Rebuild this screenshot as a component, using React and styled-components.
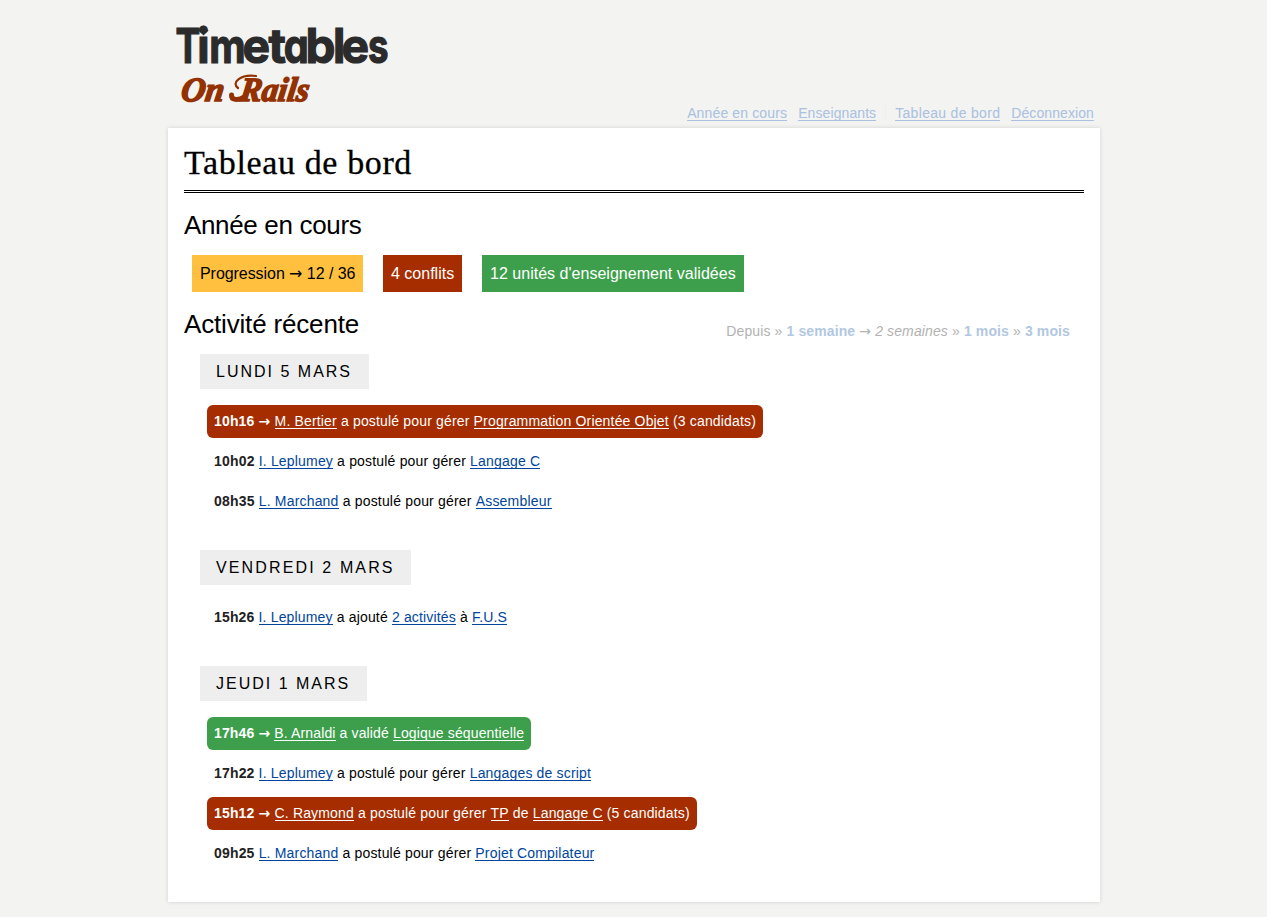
import React from 'react';
import styled, { createGlobalStyle, css } from 'styled-components';

const GlobalStyle = createGlobalStyle`
  * { box-sizing: border-box; }
  body {
    margin: 0;
    background: #f3f3f2;
    color: #000;
    font: 14px/17px "Liberation Sans", Arial, sans-serif;
  }
`;

const Page = styled.div`
  width: 932px;
  min-height: 917px;
  margin: 0 auto 0 168px;
`;

const Header = styled.header`
  display: flex;
  justify-content: space-between;
  align-items: flex-end;
  height: 128px;
  padding-right: 6px;
`;

const Logo = styled.svg`
  align-self: flex-start;
  width: 240px;
  height: 110px;
  overflow: visible;
`;

const LogoTitle = styled.text`
  font: 700 48px Inter, sans-serif;
  font-feature-settings: "cv11" 1;
  fill: #2b2b2b;
  stroke: #2b2b2b;
  stroke-width: 1.2;
`;

const LogoDiamond = styled.path`
  fill: #2b2b2b;
`;

const LogoTagline = styled.text`
  font: italic bold 34px "Liberation Serif", serif;
  fill: #933200;
  stroke: #933200;
  stroke-width: 1.6;
`;

const Swash = styled.path`
  fill: none;
  stroke: #933200;
  stroke-width: ${(p) => p.$weight}px;
  stroke-linecap: round;
`;

const Nav = styled.nav`
  display: flex;
  gap: 11px;
  padding-bottom: 7px;
`;

const NavLink = styled.a`
  height: 16px;
  line-height: 16px;
  color: #a9c0de;
  border-bottom: 1px solid #a9c0de;
  white-space: nowrap;
  letter-spacing: ${(p) => p.$spacing || 0}px;
`;

const Divider = styled.span`
  width: 1px;
  height: 15px;
  margin: 0 -2px;
  background: #eeeeef;
`;

const Panel = styled.main`
  height: 774px;
  padding: 16px;
  background: #fff;
  box-shadow: 0 0 4px rgba(0, 0, 0, 0.14);
`;

const Title = styled.h1`
  height: 49px;
  margin: 0 0 16px;
  border-bottom: 3px double #000;
  font: 400 34px/38px "Liberation Serif", Georgia, serif;
  letter-spacing: 0.63px;
  -webkit-text-stroke: 0.3px #000;
`;

const SectionTitle = styled.h2`
  margin: 0;
  font-size: 26px;
  font-weight: 400;
  line-height: 32px;
  letter-spacing: ${(p) => p.$spacing || 0}px;
`;

const tones = {
  warning: css`background: #ffc040; color: #000;`,
  danger: css`background: #a52d00; color: #fff;`,
  success: css`background: #3d9f4b; color: #fff;`,
};

const Stats = styled.div`
  display: flex;
  gap: 20px;
  margin: 14px 8px 16px;
`;

const Stat = styled.div`
  height: 37px;
  padding: 0 8px;
  font-size: 16px;
  line-height: 37px;
  white-space: nowrap;
  width: ${(p) => p.$width}px;
  letter-spacing: ${(p) => p.$spacing || 0}px;
  ${(p) => tones[p.$tone]}
`;

const Arrow = styled.span`
  font-family: "DejaVu Sans", sans-serif;
  line-height: 1;
`;

const SectionHeader = styled.div`
  display: flex;
  justify-content: space-between;
  padding-right: 14px;
`;

const Periods = styled.div`
  padding-top: 15px;
  height: 32px;
  color: #b2b2b2;
  white-space: nowrap;
  letter-spacing: 0.12px;
  b { color: #b2c7e1; }
`;

const Day = styled.section`
  padding: 14px 7px 0 16px;
  margin-bottom: 18px;
`;

const DayTitle = styled.h3`
  width: ${(p) => p.$width}px;
  height: 35px;
  margin: 0 0 16px;
  padding-left: 16px;
  background: #eee;
  font-size: 16px;
  font-weight: 400;
  line-height: 35px;
  letter-spacing: ${(p) => p.$spacing}px;
  text-transform: uppercase;
  white-space: nowrap;
`;

const Activities = styled.ul`
  display: flex;
  flex-direction: column;
  align-items: flex-start;
  gap: 7px;
  margin: 0 0 0 7px;
  padding: 0;
  list-style: none;
`;

const Activity = styled.li`
  height: 33px;
  padding: 0 7px;
  border-radius: 6px;
  line-height: 33px;
  white-space: nowrap;
  letter-spacing: ${(p) => p.$spacing}px;
  ${(p) => tones[p.$tone]}
`;

const Time = styled.b`
  color: ${(p) => (p.$light ? '#fff' : '#222')};
`;

const Link = styled.a`
  display: inline-block;
  height: 16px;
  line-height: 16px;
  color: ${(p) => (p.$light ? '#fff' : '#00459b')};
  border-bottom: 1px solid currentColor;
`;

// Each logo letter: glyph, left position, advance width.
const logoLetters = [
  ['T', 7.4, 24.8],
  ['i', 29.3, 12.3],
  ['m', 41.2, 36.4],
  ['e', 74.6, 27.5],
  ['t', 100.6, 17.4],
  ['a', 115.8, 25],
  ['b', 137.5, 30],
  ['l', 165.1, 12.3],
  ['e', 173.6, 27.5],
  ['s', 199.9, 20.5],
];

const days = [
  { title: 'Lundi 5 mars', width: 169, spacing: 2, items: [
    { time: '10h16', tone: 'danger', spacing: 0.165, parts: [['M. Bertier'], ' a postulé pour gérer ', ['Programmation Orientée Objet'], ' (3 candidats)'] },
    { time: '10h02', spacing: 0.18, parts: [['I. Leplumey'], ' a postulé pour gérer ', ['Langage C']] },
    { time: '08h35', spacing: 0.185, parts: [['L. Marchand'], ' a postulé pour gérer ', ['Assembleur']] },
  ] },
  { title: 'Vendredi 2 mars', width: 211, spacing: 2.13, items: [
    { time: '15h26', spacing: 0.16, parts: [['I. Leplumey'], ' a ajouté ', ['2 activités'], ' à ', ['F.U.S']] },
  ] },
  { title: 'Jeudi 1 mars', width: 167, spacing: 2, items: [
    { time: '17h46', tone: 'success', spacing: 0.135, parts: [['B. Arnaldi'], ' a validé ', ['Logique séquentielle']] },
    { time: '17h22', spacing: 0.17, parts: [['I. Leplumey'], ' a postulé pour gérer ', ['Langages de script']] },
    { time: '15h12', tone: 'danger', spacing: 0.16, parts: [['C. Raymond'], ' a postulé pour gérer ', ['TP'], ' de ', ['Langage C'], ' (5 candidats)'] },
    { time: '09h25', spacing: 0.175, parts: [['L. Marchand'], ' a postulé pour gérer ', ['Projet Compilateur']] },
  ] },
];

export default function App() {
  return (
    <>
      <GlobalStyle />
      <Page>
        <Header>
          <Logo viewBox="0 0 240 110">
            <LogoTitle y="63.4">
              {logoLetters.map(([letter, x, advance], i) => (
                <tspan key={i} x={x} textLength={advance} lengthAdjust="spacingAndGlyphs">{letter}</tspan>
              ))}
            </LogoTitle>
            <LogoDiamond d="M35.5 25.5 L40.5 30.5 L35.5 35.5 L30.5 30.5 Z" />
            <LogoTagline transform="translate(0 101) skewX(-8)">
              <tspan x="12" textLength="43" lengthAdjust="spacingAndGlyphs">On</tspan>
              <tspan> </tspan>
              <tspan x="71" textLength="69" lengthAdjust="spacingAndGlyphs">Rails</tspan>
            </LogoTagline>
            <Swash $weight={5} d="M63.5 95 C63 100 70 101 76 97" />
            <Swash $weight={2.2} d="M70 88 C63 83 72 74 88 76" />
          </Logo>
          <Nav>
            <NavLink $spacing={0.14}>Année en cours</NavLink>
            <NavLink $spacing={0.09}>Enseignants</NavLink>
            <Divider />
            <NavLink $spacing={0.31}>Tableau de bord</NavLink>
            <NavLink $spacing={0.09}>Déconnexion</NavLink>
          </Nav>
        </Header>
        <Panel>
          <Title>Tableau de bord</Title>
          <SectionTitle $spacing={-0.34}>Année en cours</SectionTitle>
          <Stats>
            <Stat $tone="warning" $width={171} $spacing={-0.06}>Progression <Arrow>→</Arrow> 12 / 36</Stat>
            <Stat $tone="danger" $width={79}>4 conflits</Stat>
            <Stat $tone="success" $width={262} $spacing={0.02}>12 unités d'enseignement validées</Stat>
          </Stats>
          <SectionHeader>
            <SectionTitle $spacing={-0.17}>Activité récente</SectionTitle>
            <Periods>Depuis » <b>1 semaine</b> <Arrow>→</Arrow> <i>2 semaines</i> » <b>1 mois</b> » <b>3 mois</b></Periods>
          </SectionHeader>
          {days.map((day) => (
            <Day key={day.title}>
              <DayTitle $width={day.width} $spacing={day.spacing}>{day.title}</DayTitle>
              <Activities>
                {day.items.map((item) => (
                  <Activity key={item.time} $tone={item.tone} $spacing={item.spacing}>
                    <Time $light={!!item.tone}>{item.time}{item.tone && <> <Arrow>→</Arrow></>}</Time>{' '}
                    {item.parts.map((part, i) => (
                      Array.isArray(part) ? <Link key={i} $light={!!item.tone}>{part[0]}</Link> : part
                    ))}
                  </Activity>
                ))}
              </Activities>
            </Day>
          ))}
        </Panel>
      </Page>
    </>
  );
}
